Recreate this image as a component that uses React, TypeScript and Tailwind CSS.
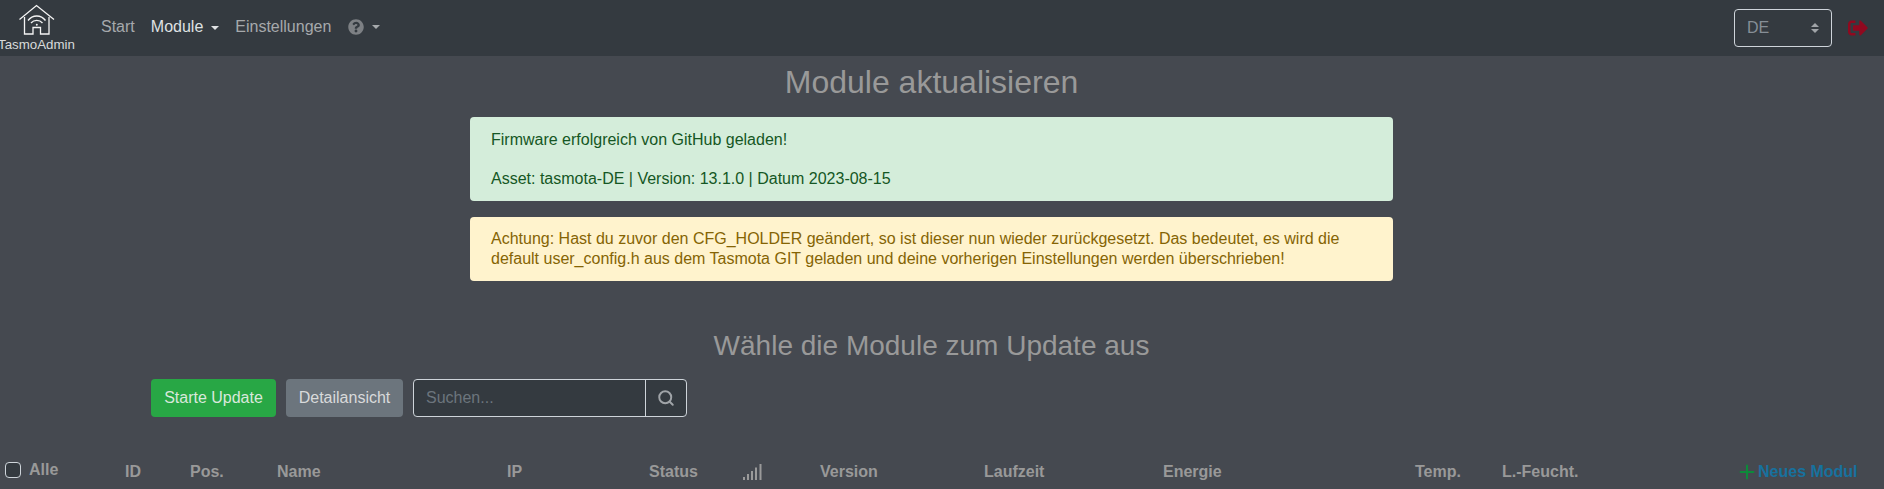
import { Plus, Search } from "lucide-react";
import { FaQuestionCircle, FaSignOutAlt } from "react-icons/fa";

const columns = [
  { label: "ID", className: "w-[65px]" },
  { label: "Pos.", className: "w-[87px]" },
  { label: "Name", className: "w-[230px]" },
  { label: "IP", className: "w-[142px]" },
  { label: "Status", className: "w-[94px]" },
];

const columnsRight = [
  { label: "Version", className: "w-[164px]" },
  { label: "Laufzeit", className: "w-[179px]" },
  { label: "Energie", className: "w-[252px]" },
  { label: "Temp.", className: "w-[87px]" },
  { label: "L.-Feucht.", className: "w-[236px]" },
];

function Logo() {
  return (
    <div className="relative w-[75px] h-[56px] shrink-0 overflow-hidden">
      <svg
        viewBox="0 0 75 40"
        className="absolute left-0 top-0 w-[75px] h-[40px]"
        fill="none"
        stroke="#f4f4f4"
        strokeWidth="1.3"
      >
        <path d="M19.5 19.5L36.5 5.5L54 19.5" />
        <path d="M24.5 17V34H33V27.5H40.5V34H49V17" />
        <path d="M28 20.5C32.5 14.5 41 14.5 45.5 20.5" />
        <path d="M31 23C34 19.5 39.5 19.5 42.5 23" />
        <circle cx="36.8" cy="24.8" r="1" fill="#f4f4f4" stroke="none" />
      </svg>
      <span className="absolute left-[-2px] top-[36px] text-[13.3px] leading-[17px] whitespace-nowrap text-[#d8dadb]">
        TasmoAdmin
      </span>
    </div>
  );
}

function Caret() {
  return (
    <span className="inline-block ml-[8px] w-0 h-0 border-x-[4px] border-x-transparent border-t-[4px] border-t-current align-[2px]" />
  );
}

function Navbar() {
  return (
    <nav className="flex items-center h-[56px] bg-[#343a40] pr-[16px]">
      <Logo />
      <div className="flex items-center ml-[26px] text-[#a6a9ac] h-[56px] pb-[2px]">
        <span>Start</span>
        <span className="ml-[16px] text-[#dfe1e3]">
          Module
          <Caret />
        </span>
        <span className="ml-[16px]">Einstellungen</span>
        <span className="ml-[16px] flex items-center">
          <FaQuestionCircle className="ml-[1px] text-[#7d8084] w-[16px] h-[16px]" />
          <Caret />
        </span>
      </div>
      <div className="ml-auto flex items-center">
        <div className="flex items-center justify-between w-[98px] h-[38px] border border-[#ced4da] rounded-[4px] pl-[12px] pr-[12px] text-[#868e96]">
          <span>DE</span>
          <svg viewBox="0 0 8 10" className="w-[8px] h-[10px]" fill="#a0a4a8">
            <path d="M4 0L8 4H0Z" />
            <path d="M4 10L0 6H8Z" />
          </svg>
        </div>
        <FaSignOutAlt className="ml-[16px] w-[20px] h-[20px] text-[#90091f]" />
      </div>
    </nav>
  );
}

function Alerts() {
  return (
    <div className="w-[923px] mx-auto flex flex-col gap-[16px]">
      <div className="h-[84px] rounded-[4px] bg-[#d4edda] text-[#155724] px-[21px] py-[13px] leading-[19.5px]">
        <p>Firmware erfolgreich von GitHub geladen!</p>
        <p className="mt-[19.5px]">Asset: tasmota-DE | Version: 13.1.0 | Datum 2023-08-15</p>
      </div>
      <div className="h-[64px] rounded-[4px] bg-[#fff3cd] text-[#856404] px-[21px] py-[12px] leading-[19.5px]">
        Achtung: Hast du zuvor den CFG_HOLDER geändert, so ist dieser nun wieder zurückgesetzt. Das bedeutet, es wird die default user_config.h aus dem Tasmota GIT geladen und deine vorherigen Einstellungen werden überschrieben!
      </div>
    </div>
  );
}

function Toolbar() {
  return (
    <div className="flex items-center h-[38px] ml-[151px] mt-[16px]">
      <button className="h-[38px] w-[125px] rounded-[4px] bg-[#28a745] text-[#d9e8dc]">
        Starte Update
      </button>
      <button className="ml-[10px] h-[38px] w-[117px] rounded-[4px] bg-[#6c757d] text-[#d9dadb]">
        Detailansicht
      </button>
      <div className="ml-[10px] flex h-[38px] w-[274px] rounded-[4px] border border-[#ced4da] bg-[#343a40]">
        <span className="flex-1 pl-[12px] leading-[36px] text-[#6c757d]">Suchen...</span>
        <span className="flex items-center justify-center w-[41px] border-l border-[#ced4da]">
          <Search className="w-[18px] h-[18px] text-[#a0a4a8]" strokeWidth={2.6} />
        </span>
      </div>
    </div>
  );
}

function SignalIcon() {
  return (
    <svg viewBox="0 0 19 16" className="w-[19px] h-[16px]" fill="#9a9a9a">
      <rect x="0" y="13" width="2" height="3" />
      <rect x="4" y="10" width="2" height="6" />
      <rect x="8" y="7" width="2" height="9" />
      <rect x="12" y="3.5" width="2" height="12.5" />
      <rect x="16.5" y="0" width="2" height="16" />
    </svg>
  );
}

function TableHead() {
  return (
    <div className="flex items-center mt-[35px] h-[40px] text-[#999999] font-bold">
      <div className="w-[125px] shrink-0 flex items-center pl-[5px] pb-[5px]">
        <span className="w-[16px] h-[16px] rounded-[4px] border border-[#ced4da] bg-[#343a40]" />
        <span className="ml-[8px] pb-[1px] leading-[19px]">Alle</span>
      </div>
      {columns.map((col) => (
        <div key={col.label} className={`shrink-0 ${col.className}`}>
          {col.label}
        </div>
      ))}
      <div className="w-[77px] shrink-0 flex">
        <SignalIcon />
      </div>
      {columnsRight.map((col) => (
        <div key={col.label} className={`shrink-0 ${col.className}`}>
          {col.label}
        </div>
      ))}
      <div className="shrink-0 flex items-center text-[#17719e] whitespace-nowrap">
        <Plus className="-ml-[2px] w-[22px] h-[22px] text-[#0d8a3a]" strokeWidth={2.2} />
        Neues Modul
      </div>
    </div>
  );
}

export default function App() {
  return (
    <div className="w-[1884px] h-[489px] overflow-hidden bg-[#454950] font-['Liberation_Sans',Arial,sans-serif] text-[16px]">
      <Navbar />
      <div className="w-[1863px]">
        <h1 className="text-center text-[32px] leading-[38px] text-[#999999] mt-[7px] mb-[16px]">
          Module aktualisieren
        </h1>
        <Alerts />
        <h2 className="text-center text-[28px] leading-[34px] text-[#999999] mt-[48px]">
          Wähle die Module zum Update aus
        </h2>
        <Toolbar />
        <TableHead />
      </div>
    </div>
  );
}
